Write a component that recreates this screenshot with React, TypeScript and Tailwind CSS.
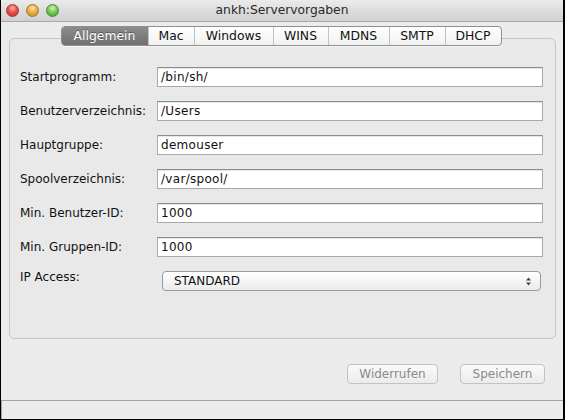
import React from "react";

const font = { fontFamily: '"DejaVu Sans", "Liberation Sans", sans-serif' };

const rows: { label: string; value: string }[] = [
  { label: "Startprogramm:", value: "/bin/sh/" },
  { label: "Benutzerverzeichnis:", value: "/Users" },
  { label: "Hauptgruppe:", value: "demouser" },
  { label: "Spoolverzeichnis:", value: "/var/spool/" },
  { label: "Min. Benutzer-ID:", value: "1000" },
  { label: "Min. Gruppen-ID:", value: "1000" },
];

const tabs = [
  { name: "Allgemein", w: "w-[86px]" },
  { name: "Mac", w: "w-[46px]" },
  { name: "Windows", w: "w-[79px]" },
  { name: "WINS", w: "w-[55px]" },
  { name: "MDNS", w: "w-[61px]" },
  { name: "SMTP", w: "w-[56px]" },
  { name: "DHCP", w: "w-[56px]" },
];

export default function App() {
  return (
    <div
      className="w-[565px] h-[420px] flex flex-col bg-[#ececec] border-l border-r-2 border-b border-black overflow-hidden text-[12px] text-[#111]"
      style={font}
    >
      {/* Title bar */}
      <div className="h-[22px] shrink-0 relative flex items-center justify-center bg-[linear-gradient(#ebebeb,#d0d0d0)] border-b border-[#a9a9a9]">
        <div className="absolute left-[5px] top-[4px] flex gap-[7px]">
          <span className="w-[13px] h-[13px] rounded-full border border-[#9c3a36] bg-[radial-gradient(circle_at_50%_30%,#ffb3ab_0%,#e8514a_45%,#c3302a_100%)]" />
          <span className="w-[13px] h-[13px] rounded-full border border-[#a2762b] bg-[radial-gradient(circle_at_50%_30%,#ffe6a8_0%,#e9b140_45%,#c58a1d_100%)]" />
          <span className="w-[13px] h-[13px] rounded-full border border-[#4d8a34] bg-[radial-gradient(circle_at_50%_30%,#d3f5b4_0%,#79c95a_45%,#3d9a2b_100%)]" />
        </div>
        <span className="text-[12.3px] text-[#2a2a2a]">ankh:Servervorgaben</span>
      </div>

      {/* Tabs */}
      <div className="relative z-10 mt-[4px] flex justify-center pr-[2px]">
        <div className="flex h-[20px] rounded-[4px] border border-[#8f8f8f] overflow-hidden bg-[linear-gradient(#ffffff,#f1f1f1)] shadow-[0_1px_0_rgba(255,255,255,0.6)]">
          {tabs.map((t, i) => (
            <div
              key={t.name}
              className={
                i === 0
                  ? `${t.w} flex items-center justify-center text-[12.4px] text-white bg-[linear-gradient(#8c8c8c,#707070)] [text-shadow:0_-1px_0_rgba(0,0,0,0.35)]`
                  : `${t.w} flex items-center justify-center text-[12.4px] text-[#111] border-l border-[#c4c4c4]`
              }
            >
              {t.name}
            </div>
          ))}
        </div>
      </div>

      {/* Group box */}
      <div className="-mt-[8px] ml-[8px] mr-[7px] h-[301px] shrink-0 rounded-[5px] border border-[#c6c6c6] bg-[#e9e9e9] pt-[28px] pl-[10px] pr-[12px]">
        <div className="flex flex-col gap-[14px]">
          {rows.map((r) => (
            <div key={r.label} className="flex items-center h-[20px]">
              <div className="w-[137px] shrink-0 -mt-[1px]">{r.label}</div>
              <div className="flex-1 h-[20px] bg-white border border-[#a9a9a9] border-t-[#8e8e8e] shadow-[inset_0_1px_0_#e6e6e6] flex items-center pl-[3px] tracking-[0.3px]">
                {r.value}
              </div>
            </div>
          ))}
          <div className="flex items-center h-[20px]">
            <div className="w-[142px] shrink-0 -mt-[8px]">IP Access:</div>
            <div className="flex-1 mr-[2px] h-[20px] rounded-[4px] border border-[#9b9b9b] bg-[linear-gradient(#ffffff,#ececec)] flex items-center pl-[11px] pr-[6px]">
              <span className="flex-1">STANDARD</span>
              <svg width="7" height="11" viewBox="0 0 7 11" className="mr-[2px]">
                <path d="M3.5 1.5 L6 4.5 L1 4.5 Z" fill="#444" />
                <path d="M3.5 9.5 L6 6.5 L1 6.5 Z" fill="#444" />
              </svg>
            </div>
          </div>
        </div>
      </div>

      {/* Buttons */}
      <div className="mt-[25px] flex justify-end gap-[22px] pr-[18px]">
        <div className="w-[91px] h-[20px] rounded-[4px] border border-[#c3c3c3] bg-[linear-gradient(#fafafa,#ececec)] flex items-center justify-center text-[#8a8a8a]">
          Widerrufen
        </div>
        <div className="w-[85px] h-[20px] rounded-[4px] border border-[#c3c3c3] bg-[linear-gradient(#fafafa,#ececec)] flex items-center justify-center text-[#8a8a8a]">
          Speichern
        </div>
      </div>

      {/* Status bar */}
      <div className="mt-auto h-[19px] border-t border-l border-[#a5a5a5] bg-[#ececec]" />
    </div>
  );
}
